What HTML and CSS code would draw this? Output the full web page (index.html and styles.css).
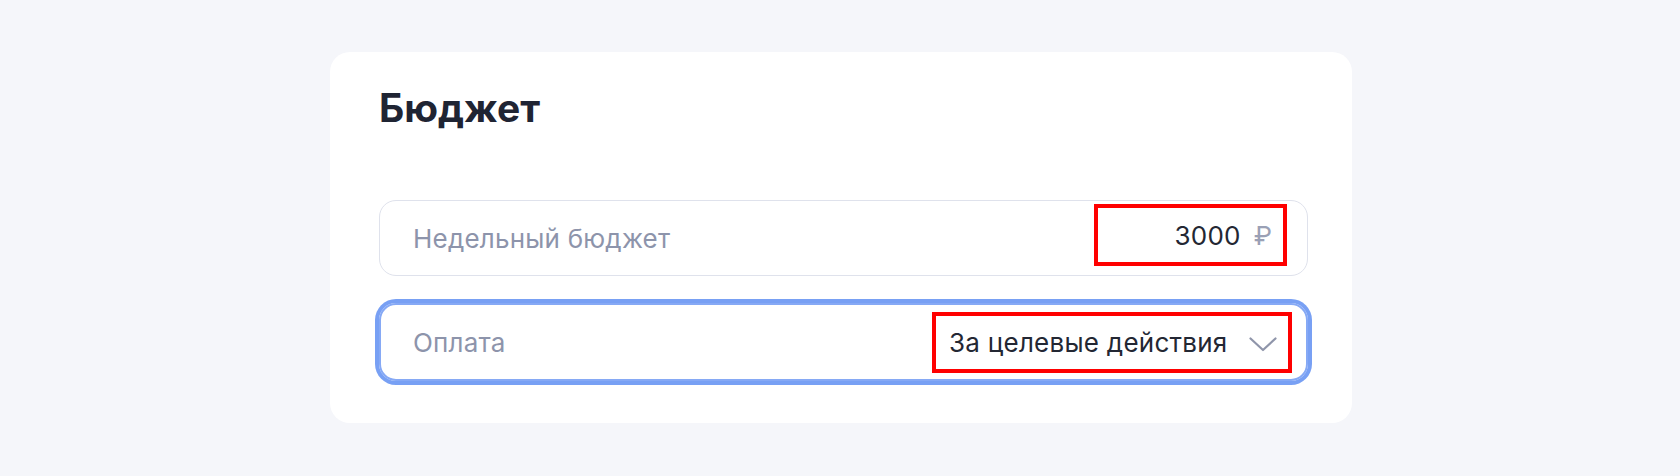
FILE: index.html
```html
<!DOCTYPE html>
<html lang="ru">
<head>
<meta charset="utf-8">
<title>Бюджет</title>
<link rel="stylesheet" href="styles.css">
</head>
<body>
<div class="page">
  <section class="card">
    <h2 class="title">Бюджет</h2>
    <div class="fields">
      <div class="field">
        <span class="label">Недельный бюджет</span>
        <div class="mark mark--budget">
          <span class="value">3000</span>
          <span class="currency">₽</span>
        </div>
      </div>
      <div class="field field--focus">
        <span class="label">Оплата</span>
        <div class="mark mark--pay">
          <span class="value">За целевые действия</span>
          <svg class="chevron" width="28" height="15" viewBox="0 0 28 15" aria-hidden="true">
            <path d="M1.5 1.5 L14 13 L26.5 1.5" fill="none" stroke="#8f95aa" stroke-width="2.2" stroke-linecap="round" stroke-linejoin="round"/>
          </svg>
        </div>
      </div>
    </div>
  </section>
</div>
</body>
</html>
```
FILE: styles.css
```css
html, body {
  margin: 0;
  background: #f5f6fa;
  font-family: Inter, "Noto Sans", sans-serif;
}

.page {
  padding: 52px 0 0 330px;
}

.card {
  width: 1022px;
  height: 371px;
  box-sizing: border-box;
  background: #ffffff;
  border-radius: 20px;
  padding: 32px 44px 0 49px;
}

.title {
  margin: 0;
  font-size: 39px;
  line-height: 48px;
  font-weight: 700;
  color: #1f2433;
}

.fields {
  margin-top: 68px;
  display: flex;
  flex-direction: column;
  gap: 27px;
}

.field {
  height: 76px;
  box-sizing: border-box;
  border: 1px solid #dfe2ec;
  border-radius: 17px;
  display: flex;
  align-items: center;
  justify-content: space-between;
  padding: 0 18px 0 33px;
}

.field--focus {
  border: 2px solid #86a9f5;
  box-shadow: 0 0 0 4px #78a0f4;
  height: 78px;
  padding: 0 14px 0 32px;
}

.label {
  font-size: 26px;
  letter-spacing: 0.2px;
  color: #8d94ab;
}

.mark {
  box-sizing: border-box;
  border: 4px solid #ff0000;
  display: flex;
  align-items: center;
}

.mark--budget {
  width: 193px;
  height: 62px;
  justify-content: flex-end;
  padding-right: 11px;
  gap: 13px;
  margin-bottom: 6px;
  margin-right: 2px;
}

.mark--pay {
  width: 360px;
  height: 61px;
  padding: 0 11px 0 13px;
  justify-content: space-between;
}

.value {
  font-size: 26px;
  letter-spacing: 0.25px;
  color: #232733;
}

.currency {
  font-size: 26px;
  color: #9aa0b5;
}

.chevron {
  display: block;
  margin-top: 4px;
}
```
